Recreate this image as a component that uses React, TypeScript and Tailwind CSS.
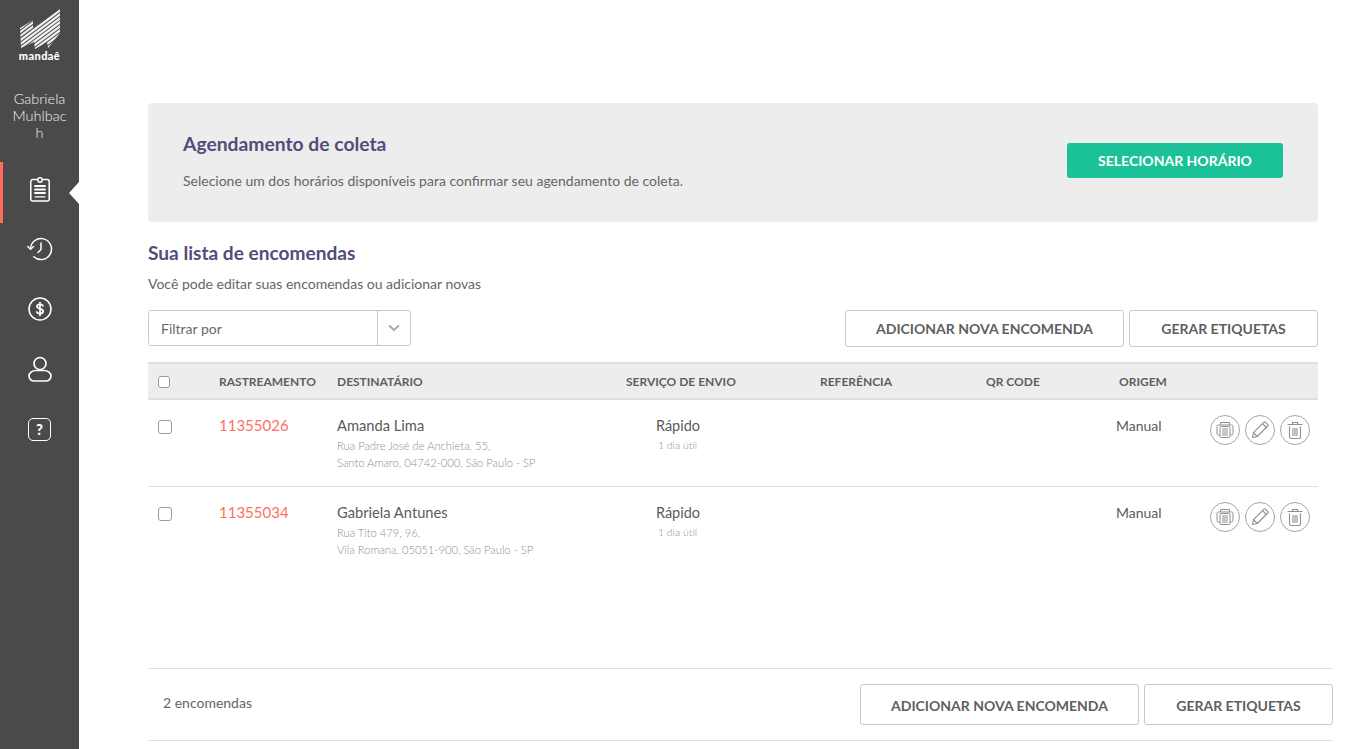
const FONT = "font-['Lato','Noto_Sans',sans-serif]";

const COLS = "grid grid-cols-[71px_118px_289px_194px_163px_136px_199px]";

const orders = [
  {
    id: "11355026",
    name: "Amanda Lima",
    line1: "Rua Padre José de Anchieta, 55,",
    line2: "Santo Amaro, 04742-000, São Paulo - SP",
  },
  {
    id: "11355034",
    name: "Gabriela Antunes",
    line1: "Rua Tito 479, 96,",
    line2: "Vila Romana, 05051-900, São Paulo - SP",
  },
];

function Logo() {
  const lines = [];
  for (let i = 0; i < 18; i++) {
    const y0 = 12 + i * 4;
    lines.push(<line key={i} x1={0} y1={y0} x2={42} y2={y0 - 31.5} />);
  }
  return (
    <svg width="42" height="40" viewBox="0 0 42 40" className="block">
      <defs>
        <clipPath id="logo-shape">
          <path d="M1 19 L14 11 V19 L41 0 V24 L29 39 L28 33 L16 40 L15 33 L2 39 Z" />
        </clipPath>
      </defs>
      <g clipPath="url(#logo-shape)" stroke="#f2f2f2" strokeWidth="2.200">
        {lines}
      </g>
    </svg>
  );
}

function ClipboardIcon() {
  return (
    <svg width="20" height="25" viewBox="0 0 20 25" fill="none" stroke="#fff" strokeWidth="1.500" strokeLinecap="round">
      <path d="M7 2.500H2.800a2 2 0 0 0-2 2V22a2 2 0 0 0 2 2h14.400a2 2 0 0 0 2-2V4.500a2 2 0 0 0-2-2H13" />
      <circle cx="10" cy="3" r="2.200" />
      <path d="M5 9h10M5 12.500h10M5 16h10" strokeWidth="1.800" />
      <path d="M5 19.800h10" strokeWidth="1.300" />
    </svg>
  );
}

function HistoryIcon() {
  return (
    <svg width="26" height="24" viewBox="0 0 26 24" fill="none" stroke="#fff" strokeWidth="1.500" strokeLinecap="round" strokeLinejoin="round">
      <path d="M3.500 12a10.500 10.500 0 1 1 3.300 7.700" />
      <path d="M0.800 9.500l2.700 2.700 3-2.700" />
      <path d="M14 6v6.500l-3 3" />
    </svg>
  );
}

function DollarIcon() {
  return (
    <svg width="24" height="24" viewBox="0 0 24 24" fill="none" stroke="#fff" strokeLinecap="round">
      <circle cx="12" cy="12" r="11" strokeWidth="1.500" />
      <path d="M15 8.800c-.5-1-1.600-1.500-3-1.500-1.800 0-3 .9-3 2.300 0 3 6.200 1.500 6.200 4.700 0 1.400-1.400 2.300-3.200 2.300-1.600 0-2.800-.6-3.300-1.700M12 5.500v13" strokeWidth="1.700" />
    </svg>
  );
}

function UserIcon() {
  return (
    <svg width="24" height="26" viewBox="0 0 24 26" fill="none" stroke="#fff" strokeWidth="1.700">
      <circle cx="12" cy="7.500" r="6" />
      <path d="M8 14.500h8c4 0 7 2.600 7 5.500 0 2.800-2.500 5-5 5H6c-2.500 0-5-2.200-5-5 0-2.900 3-5.500 7-5.500z" />
    </svg>
  );
}

function HelpIcon() {
  return (
    <div className="flex h-[23px] w-[23px] items-center justify-center rounded-[5px] border-[1.5px] border-white text-[15px] leading-none font-black text-white">
      ?
    </div>
  );
}

function PrinterIcon() {
  return (
    <svg width="20" height="20" viewBox="0 0 20 20" fill="none" stroke="#8f8f8f" strokeWidth="1">
      <path d="M5.500 5V2.500h9V5" />
      <path d="M5 15H3.500A1.500 1.500 0 0 1 2 13.500V6.500A1.500 1.500 0 0 1 3.500 5h13A1.500 1.500 0 0 1 18 6.500v7a1.500 1.500 0 0 1-1.500 1.500H15" />
      <rect x="5" y="6.500" width="10" height="11" rx="1.200" fill="#fff" />
      <path d="M7 9h6M7 11h6M7 13h6M7 15h6" />
    </svg>
  );
}

function PencilIcon() {
  return (
    <svg width="20" height="20" viewBox="0 0 20 20" fill="none" stroke="#8f8f8f" strokeWidth="1.100" strokeLinejoin="round">
      <path d="M2.500 17.500l1-4.800L14 2.200a1 1 0 0 1 1.400 0l2.400 2.400a1 1 0 0 1 0 1.400L7.300 16.500z" />
      <path d="M3.500 12.700l3.800 3.800M12.500 3.700l3.800 3.800" />
    </svg>
  );
}

function TrashIcon() {
  return (
    <svg width="20" height="20" viewBox="0 0 20 20" fill="none" stroke="#8f8f8f" strokeWidth="1.100">
      <path d="M2.500 4.500h15M7.500 4.500V2.500h5v2" />
      <path d="M4.500 6.500V17a1.500 1.500 0 0 0 1.500 1.500h8a1.500 1.500 0 0 0 1.500-1.500V6.500" />
      <path d="M8 8v8M10 8v8M12 8v8" />
    </svg>
  );
}

function RoundButton({ children }: { children: React.ReactNode }) {
  return (
    <button type="button" className="flex h-[30px] w-[30px] items-center justify-center rounded-full border border-[#a5a5a5] bg-white">
      {children}
    </button>
  );
}

function Checkbox({ small }: { small?: boolean }) {
  return (
    <span
      className={
        small
          ? "block h-[12px] w-[12px] rounded-[3px] border border-[#9b9b9b] bg-white"
          : "block h-[14px] w-[14px] rounded-[3px] border border-[#9b9b9b] bg-white"
      }
    />
  );
}

function OutlineButton({ children, className }: { children: React.ReactNode; className: string }) {
  return (
    <button
      type="button"
      className={`rounded-[3px] border border-[#c8c8c8] bg-white text-[14px] font-bold text-[#5f5f5f] ${className}`}
    >
      {children}
    </button>
  );
}

const NAV = [
  <ClipboardIcon key="a" />,
  <HistoryIcon key="b" />,
  <DollarIcon key="c" />,
  <UserIcon key="d" />,
  <HelpIcon key="e" />,
];

export default function App() {
  return (
    <div className={`${FONT} flex h-[749px] w-[1356px] overflow-hidden bg-white text-[#5b5b5b]`}>
      <aside className="flex w-[79px] shrink-0 flex-col items-stretch bg-[#4a4a4a] text-white">
        <div className="flex flex-col items-center pt-[9px]">
          <Logo />
          <span className="text-[11px] leading-[14px] font-black tracking-[0.4px] text-white">mandaê</span>
        </div>
        <div className="mt-[27px] px-[12px] text-center text-[14.5px] leading-[17px] font-light break-all text-[#f1f1f1]">
          Gabriela Muhlbach
        </div>
        <nav className="mt-[18px] flex flex-col">
          {NAV.map((icon, i) => (
            <div key={i} className="relative flex h-[60px] items-center justify-center">
              {i === 0 && (
                <>
                  <span className="absolute top-[3px] left-0 h-[61px] w-[3px] bg-[#ff6b5c]" />
                  <span className="absolute top-[23px] right-0 h-0 w-0 border-y-[11px] border-r-[10px] border-y-transparent border-r-white" />
                </>
              )}
              {icon}
            </div>
          ))}
        </nav>
      </aside>

      <main className="flex min-w-0 flex-1 flex-col pt-[103px] pl-[69px]">
        <div className="w-[1170px]">
          <section className="flex h-[119px] items-center justify-between rounded-[4px] bg-[#ededed] px-[35px]">
            <div>
              <h2 className="text-[19.3px] leading-[24px] font-bold text-[#544c7a]">Agendamento de coleta</h2>
              <p className="mt-[15px] mb-[2px] text-[14px] leading-[20px] text-[#666]">
                Selecione um dos horários disponíveis para confirmar seu agendamento de coleta.
              </p>
            </div>
            <button
              type="button"
              className="mb-[5px] h-[35px] w-[216px] rounded-[3px] bg-[#1bc297] text-[14px] font-bold text-white"
            >
              SELECIONAR HORÁRIO
            </button>
          </section>

          <h1 className="mt-[19px] text-[19.1px] leading-[24px] font-bold text-[#544c7a]">Sua lista de encomendas</h1>
          <p className="mt-[9px] text-[14px] leading-[20px] text-[#666]">Você pode editar suas encomendas ou adicionar novas</p>

          <div className="mt-[16px] flex items-start justify-between">
            <div className="flex h-[36px] w-[263px] items-center rounded-[3px] border border-[#c8c8c8]">
              <span className="flex-1 pl-[12px] text-[14px] text-[#6a6a6a]">Filtrar por</span>
              <span className="flex h-full w-[33px] items-center justify-center border-l border-[#c8c8c8]">
                <svg width="12" height="8" viewBox="0 0 12 8" fill="none" stroke="#a8a8a8" strokeWidth="2">
                  <path d="M1 1.500l5 4.500 5-4.500" />
                </svg>
              </span>
            </div>
            <div className="flex gap-[5px]">
              <OutlineButton className="h-[37px] w-[279px] pb-[1px]">ADICIONAR NOVA ENCOMENDA</OutlineButton>
              <OutlineButton className="h-[37px] w-[189px] pb-[1px]">GERAR ETIQUETAS</OutlineButton>
            </div>
          </div>

          <div className={`${COLS} mt-[15px] h-[38px] items-center border-y-2 border-[#dedede] bg-[#ededed] pt-[1px] text-[12px] font-bold text-[#5f5f5f]`}>
            <span className="pl-[10px]">
              <Checkbox small />
            </span>
            <span>RASTREAMENTO</span>
            <span>DESTINATÁRIO</span>
            <span>SERVIÇO DE ENVIO</span>
            <span>REFERÊNCIA</span>
            <span className="pl-[3px]">QR CODE</span>
            <span>ORIGEM</span>
          </div>

          {orders.map((o) => (
            <div key={o.id} className={`${COLS} h-[87px] border-b border-[#dedede] pt-[14px] last:border-b-0`}>
              <span className="pt-[6px] pl-[10px]">
                <Checkbox />
              </span>
              <span className="text-[15px] leading-[22px] text-[#ff6f61]">{o.id}</span>
              <div>
                <div className="text-[14.7px] leading-[22px] text-[#5b5b5b]">{o.name}</div>
                <div className="pt-[1px] text-[11.2px] leading-[17px] font-light text-[#8f8f8f]">
                  {o.line1}
                  <br />
                  {o.line2}
                </div>
              </div>
              <div className="w-[103px] pt-[1px] text-center">
                <div className="pl-[1px] text-[14.500px] leading-[22px]">Rápido</div>
                <div className="text-[10.500px] leading-[17px] font-light text-[#8f8f8f]">1 dia útil</div>
              </div>
              <span />
              <span />
              <div className="text-[14px] leading-[22px]">
                <div className="flex">
                  <span className="-ml-[3px] w-[94px] pt-[1px]">Manual</span>
                  <div className="flex gap-[5px] pt-[1px]">
                    <RoundButton>
                      <PrinterIcon />
                    </RoundButton>
                    <RoundButton>
                      <PencilIcon />
                    </RoundButton>
                    <RoundButton>
                      <TrashIcon />
                    </RoundButton>
                  </div>
                </div>
              </div>
            </div>
          ))}
        </div>

        <footer className="mt-[94px] flex h-[73px] w-[1185px] items-center justify-between border-y border-[#dedede] pl-[15px]">
          <span className="pb-[4px] text-[14px] text-[#666]">2 encomendas</span>
          <div className="flex gap-[5px]">
            <OutlineButton className="h-[41px] w-[279px] pt-[2px]">ADICIONAR NOVA ENCOMENDA</OutlineButton>
            <OutlineButton className="h-[41px] w-[189px] pt-[2px]">GERAR ETIQUETAS</OutlineButton>
          </div>
        </footer>
      </main>
    </div>
  );
}
